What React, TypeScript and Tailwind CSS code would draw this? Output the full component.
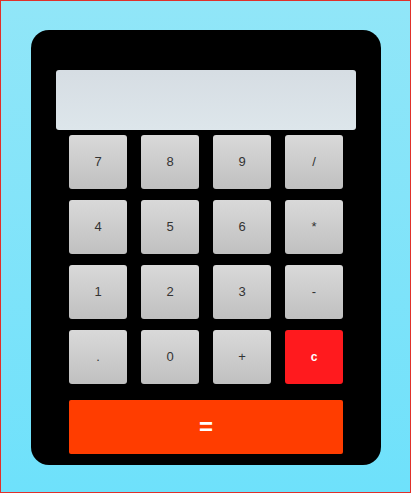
const keys = ["7", "8", "9", "/", "4", "5", "6", "*", "1", "2", "3", "-", ".", "0", "+", "c"];

export default function App() {
  return (
    <div className="w-[411px] h-[493px] border border-[#e0302a] bg-gradient-to-b from-[#91e6f8] to-[#6ee1fb] pt-[29px] pl-[30px] font-['Liberation_Sans',Arial,sans-serif]">
      <div className="w-[350px] h-[435px] bg-black rounded-[18px] pt-[40px] pl-[25px]">
        {/* Display */}
        <div className="w-[300px] h-[60px] rounded-[3px] bg-gradient-to-b from-[#d6dde3] to-[#dde6eb]" />

        {/* Keys */}
        <div className="grid grid-cols-[repeat(4,58px)] gap-x-[14px] gap-y-[11px] ml-[13px] mt-[5px]">
          {keys.map((k) => (
            <button
              key={k}
              className={`h-[54px] rounded-[3px] ${
                k === "c"
                  ? "bg-[#ff1a1e] text-white font-bold text-[12px]"
                  : "bg-gradient-to-b from-[#d9d9d9] to-[#c0c0c0] text-[#333] text-[13px]"
              }`}
            >
              {k}
            </button>
          ))}
        </div>

        <button className="block w-[274px] h-[54px] ml-[13px] mt-[16px] rounded-[2px] bg-[#ff3d00] text-white text-[24px] font-bold">
          =
        </button>
      </div>
    </div>
  );
}
